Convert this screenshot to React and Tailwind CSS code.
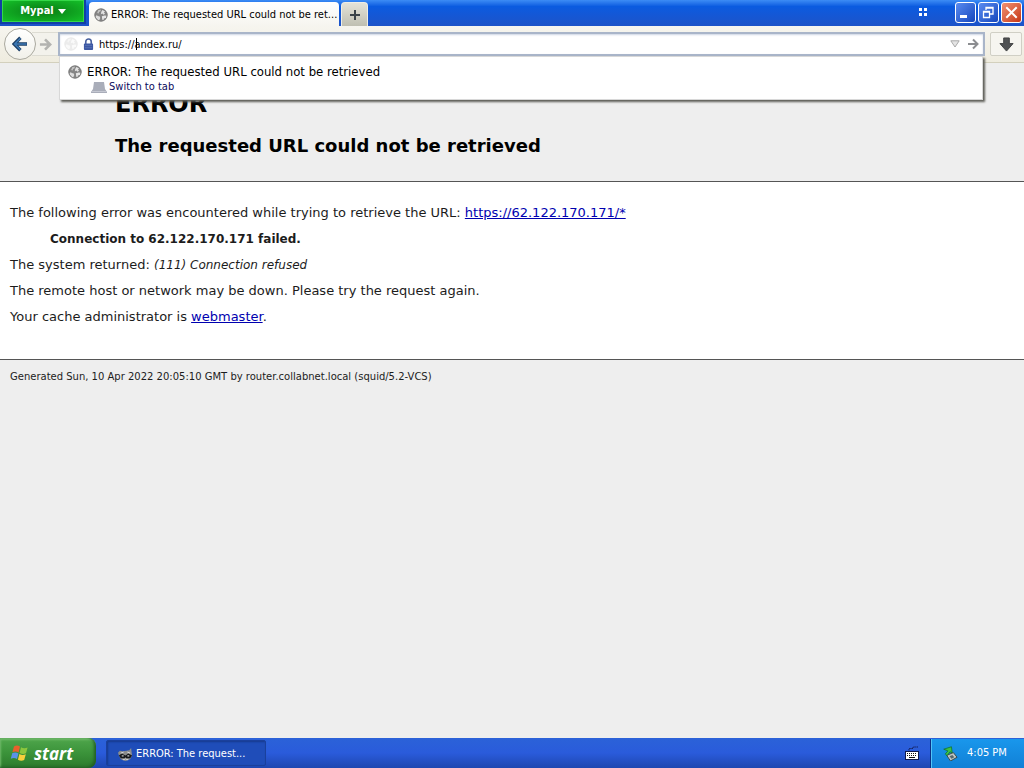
import { useState } from 'react';

const Globe = ({ className }) => (
  <svg viewBox="0 0 16 16" className={className} aria-hidden="true">
    <circle cx="8" cy="8" r="7.4" fill="#858585" />
    <path d="M1.4 9.600 3 8.400 4.400 9.200 6.600 9.600 7.200 11.400 5.800 14.600 3.400 13.200Z" fill="#dcdcdc" />
    <path d="M5 2.400 8 1.400 7.400 3.600 5.800 4.600 5.200 6.400 3.600 5.600Z" fill="#c4c4c4" />
    <path d="M9.400 2.400 12.600 3.600 11.400 5 12.600 6.600 10.800 7.800 9.600 6.400 7.800 7 8.200 4.800Z" fill="#e2e2e2" />
    <path d="M9 9.400 12.200 8.600 14.600 8.800 13.600 11.400 11.200 12 10.800 14.200 9.400 13Z" fill="#e6e6e6" />
    <circle cx="8" cy="8" r="7" fill="none" stroke="#7a7a7a" />
  </svg>
);

const TitleBar = () => (
  <header className="flex h-[26px] items-start bg-linear-to-b from-[#3c8cf5] via-[#0a5be0] via-25% to-[#1c53c8]">
    <button
      type="button"
      className="mr-[3px] flex h-6 w-[86px] shrink-0 items-center justify-center gap-1 border-2 border-t-0 border-[#123fa5] bg-radial-[at_50%_50%] from-[#087a14] to-[#15c42a] text-[11px] font-bold text-white shadow-[inset_0_0_0_1px_#35d848]"
    >
      Mypal
      <svg viewBox="0 0 8 5" className="h-[5px] w-2" aria-hidden="true">
        <path d="M0 0h8L4 5Z" fill="#fff" />
      </svg>
    </button>
    <div className="mt-[2px] flex h-6 w-[250px] items-center rounded-t-[4px] bg-linear-to-b from-white to-[#f6f5ef] pt-[2px] pl-[5px] text-[11px]">
      <Globe className="mr-[3px] h-[14px] w-[14px] shrink-0" />
      <span className="truncate">ERROR: The requested URL could not be ret...</span>
    </div>
    <button
      type="button"
      aria-label="New tab"
      className="mt-[2px] ml-[2px] flex h-6 w-[27px] items-center justify-center rounded-t-[4px] border border-b-0 border-[#eeeee6] bg-linear-to-b from-[#e4e3d8] to-[#bfbfb2]"
    >
      <svg viewBox="0 0 12 12" className="h-3 w-3" aria-hidden="true">
        <path d="M6 1v10M1 6h10" stroke="#3b4449" strokeWidth="2" />
      </svg>
    </button>
    <div className="ml-auto flex items-center gap-[2px] pt-[2px] pr-[2px]">
      <svg viewBox="0 0 9 9" className="mr-[25px] h-[9px] w-[9px]" aria-hidden="true">
        <path d="M0 0h3v3H0zM5 0h3v3H5zM0 5h3v3H0zM5 5h3v3H5z" fill="#fff" />
      </svg>
      <button
        type="button"
        aria-label="Minimize"
        className="flex h-[21px] w-[21px] items-center justify-center rounded-[3px] border border-white bg-linear-to-br from-[#5a8bf0] to-[#1546bd]"
      >
        <svg viewBox="0 0 15 15" className="h-[15px] w-[15px]" aria-hidden="true">
          <path d="M2 10h7v3H2z" fill="#fff" />
        </svg>
      </button>
      <button
        type="button"
        aria-label="Restore"
        className="flex h-[21px] w-[21px] items-center justify-center rounded-[3px] border border-white bg-linear-to-br from-[#5a8bf0] to-[#1546bd]"
      >
        <svg viewBox="0 0 15 15" className="h-[15px] w-[15px]" aria-hidden="true">
          <path d="M5 5V2.500h7V9h-3M5 3h7" fill="none" stroke="#fff" strokeWidth="1.3" />
          <path d="M2.500 6.500h6v6h-6zM2 7h7" fill="none" stroke="#fff" strokeWidth="1.3" />
        </svg>
      </button>
      <button
        type="button"
        aria-label="Close"
        className="flex h-[21px] w-[21px] items-center justify-center rounded-[3px] border border-white bg-linear-to-br from-[#f09070] to-[#c6340f]"
      >
        <svg viewBox="0 0 15 15" className="h-[15px] w-[15px]" aria-hidden="true">
          <path d="m3 3 9 9M12 3l-9 9" stroke="#fff" strokeWidth="2" strokeLinecap="square" />
        </svg>
      </button>
    </div>
  </header>
);

const Toolbar = () => {
  const [url, setUrl] = useState('https://andex.ru/');

  return (
    <div className="flex h-[37px] items-center border-b border-[#d3d0bd] bg-linear-to-b from-[#f6f5ef] to-[#efecdf] pr-[2px] pl-1">
      <button
        type="button"
        aria-label="Back"
        className="z-10 flex h-8 w-8 shrink-0 items-center justify-center rounded-full border border-[#aaa99f] bg-linear-to-b from-white to-[#f1f0e9]"
      >
        <svg viewBox="0 0 16 16" className="h-4 w-4" aria-hidden="true">
          <path d="M8.4 1.8 2.2 8l6.2 6.2M3 8h12" fill="none" stroke="#1d3f66" strokeWidth="3.4" />
          <path d="M8.4 2.2 2.7 8l5.7 5.8M3 8h11.6" fill="none" stroke="#3c78b4" strokeWidth="1.6" />
        </svg>
      </button>
      <button
        type="button"
        aria-label="Forward"
        className="-ml-1 flex h-6 w-[26px] shrink-0 items-center justify-center border-y border-[#dddcd3] bg-[#f3f2ec]"
      >
        <svg viewBox="0 0 14 14" className="h-[13px] w-[13px]" aria-hidden="true">
          <path d="m6.5 1.5 5.5 5.5-5.5 5.5M1 7h10" fill="none" stroke="#b3b3b0" strokeWidth="2.8" />
        </svg>
      </button>
      <div className="relative flex h-6 min-w-0 flex-1 items-center border-2 border-[#a9b5c9] bg-white px-1 shadow-[inset_0_1px_2px_#cdd6e4]">
        <Globe className="mr-[5px] h-[14px] w-[14px] shrink-0 opacity-15" />
        <svg viewBox="0 0 12 14" className="mr-[5px] h-[13px] w-[11px] shrink-0" aria-hidden="true">
          <path d="M3 7V4a3 3 0 0 1 6 0v3" fill="none" stroke="#4a62a0" strokeWidth="1.8" />
          <rect x="1" y="6" width="10" height="7" rx="1" fill="#3d58a4" />
          <path d="M2 8h8M2 10.500h8" stroke="#6079b8" strokeWidth=".8" />
        </svg>
        <input
          type="text"
          aria-label="Address"
          value={url}
          onChange={(e) => setUrl(e.target.value)}
          className="min-w-0 flex-1 bg-transparent pt-[2px] text-[11px] text-black outline-none"
        />
        {/* Text cursor */}
        <span className="absolute top-1 left-[76px] h-3 w-px bg-black" />
        <button type="button" aria-label="Show history" className="mr-[7px]">
          <svg viewBox="0 0 10 8" className="h-2 w-[10px]" aria-hidden="true">
            <path d="M.8.8h8.400L5 7Z" fill="#e4e4e4" stroke="#a9a9a9" />
          </svg>
        </button>
        <button type="button" aria-label="Go">
          <svg viewBox="0 0 12 12" className="h-3 w-3" aria-hidden="true">
            <path d="m6 1.500 4.500 4.500L6 10.500M1 6h9" fill="none" stroke="#8b8d90" strokeWidth="2" />
          </svg>
        </button>

        {/* Autocomplete popup */}
        <div className="absolute top-[22px] right-0 -left-px z-20 h-11 border border-[#d8d8d8] bg-white pt-[7px] pl-2 shadow-[2px_2px_2px_#5f5f58]">
          <div className="flex items-center text-[13px] leading-4">
            <Globe className="mr-[5px] h-[14px] w-[14px] shrink-0" />
            ERROR: The requested URL could not be retrieved
          </div>
          <a href="#tab" className="ml-[23px] flex items-center text-[11px] leading-[14px] text-[#0b0b5c]">
            <svg viewBox="0 0 16 11" className="mr-[2px] h-[11px] w-4" aria-hidden="true">
              <path d="M3 0h10l1 7 2 3v1H0v-1l2-3Z" fill="#a9adb9" />
              <path d="M0 9.500h16" stroke="#c5c8d2" />
            </svg>
            Switch to tab
          </a>
        </div>
      </div>
      <button
        type="button"
        aria-label="Downloads"
        className="ml-[5px] flex h-6 w-8 shrink-0 items-center justify-center rounded-[2px] border border-[#d0cfc5] bg-[#f6f5f0]"
      >
        <svg viewBox="0 0 16 16" className="h-[15px] w-[15px]" aria-hidden="true">
          <path d="M5 1h6v6h4l-7 8-7-8h4Z" fill="#505254" stroke="#3d3f40" />
        </svg>
      </button>
    </div>
  );
};

const ErrorPage = () => (
  <main className="flex-1 bg-[#eeeeee] font-[Verdana,'DejaVu_Sans',sans-serif] text-[#1c1c1c]">
    <div className="border-b border-[#555] pt-[26px] pb-6 pl-[115px] text-black">
      <h1 className="text-[24px] leading-[30px] font-bold">ERROR</h1>
      <h2 className="mt-4 text-[18px] leading-[22px] font-bold">The requested URL could not be retrieved</h2>
    </div>
    <div className="border-b border-[#555] bg-white px-[10px] pt-[18px] pb-[29px] text-[13px] leading-[26px]">
      <p>
        The following error was encountered while trying to retrieve the URL:{' '}
        <a href="https://62.122.170.171/*" className="text-[#0000b0] underline">https://62.122.170.171/*</a>
      </p>
      <blockquote className="ml-10 text-[12px] font-bold">Connection to 62.122.170.171 failed.</blockquote>
      <p>The system returned: <i className="text-[12px]">(111) Connection refused</i></p>
      <p>The remote host or network may be down. Please try the request again.</p>
      <p>
        Your cache administrator is <a href="#webmaster" className="text-[#0000b0] underline">webmaster</a>.
      </p>
    </div>
    <p className="px-[10px] pt-[9px] text-[10px] leading-4">
      Generated Sun, 10 Apr 2022 20:05:10 GMT by router.collabnet.local (squid/5.2-VCS)
    </p>
  </main>
);

const Taskbar = () => (
  <footer className="flex h-[30px] items-stretch bg-linear-to-b from-[#2b62d8] via-[#2a5bdb] to-[#1e47b0] text-[11px] text-white">
    <button
      type="button"
      className="flex w-24 items-center rounded-r-[8px] bg-linear-to-b from-[#4fa64c] via-[#3b933a] to-[#2c7a2c] pl-[10px] font-['Open_Sans','Noto_Sans',sans-serif] text-[17px] leading-none font-bold italic shadow-[inset_-2px_-1px_3px_#235f25,inset_1px_2px_2px_#72bd6c]"
    >
      <svg viewBox="0 0 20 18" className="mr-1 h-[18px] w-5" aria-hidden="true">
        <path d="M4 2.500Q7 .5 10 2.600L8.600 8.400Q5.600 6.600 2.400 8.200Z" fill="#e8602c" />
        <path d="M11 3.200Q14 5 17.600 3.400L16 9.200Q13 10.800 9.600 9Z" fill="#8cc63e" />
        <path d="M2.200 9.200Q5.400 7.600 8.400 9.400L7 15Q4 13.200.8 14.800Z" fill="#5a92e8" />
        <path d="M9.400 10Q12.600 11.800 15.800 10.200L14.200 16Q11.200 17.600 7.900 15.800Z" fill="#f8cf3c" />
      </svg>
      start
    </button>
    <button
      type="button"
      className="my-[2px] ml-[10px] flex w-40 items-center rounded-[2px] border border-[#1a409c] bg-[#1f4db9] pt-[2px] pl-[11px] shadow-[inset_1px_1px_2px_#163a8c]"
    >
      <svg viewBox="0 0 16 16" className="mr-[3px] h-[15px] w-[15px]" aria-hidden="true">
        <path d="M0 6 2 4l3 .5L9 4l3-.500L14 1l.5 4L15 9l-2 4-5 2-5-2-2-4Z" fill="#8b8d8c" />
        <path d="m1 9 3-2 4 2 3-2 4 2-2 3H9l-1-1-1 1H3Z" fill="#16191b" />
        <path d="m3 6.500 3-1M10 5.500l3 1M5 13.500h2l1-1 1 1h2" stroke="#dedede" fill="none" />
        <path d="M4 9.500h2M10 9.500h2" stroke="#fff" />
      </svg>
      ERROR: The request...
    </button>
    <div className="ml-auto flex items-center pr-3">
      <svg viewBox="0 0 14 14" className="h-[14px] w-[14px]" aria-hidden="true">
        <path d="M4 4.500V2.500h4V1h5" fill="none" stroke="#14205c" strokeDasharray="1.500 .7" />
        <rect x=".5" y="5.500" width="13" height="8" fill="#fff" stroke="#111b4c" />
        <path d="M2 7.500h10M2 9.500h10" stroke="#111" strokeDasharray="1 1" />
        <path d="M4 11.500h6" stroke="#111" />
      </svg>
    </div>
    <div className="mt-px flex w-[93px] items-center border-l border-[#53c5f7] bg-linear-to-b from-[#1997ec] to-[#1180d6] pl-[11px] shadow-[-1px_0_0_#0b2f86]">
      <svg viewBox="0 0 16 16" className="mr-[9px] h-[15px] w-[15px]" aria-hidden="true">
        <path d="m4 10 7-3 4 5-7 4Z" fill="#bfc6c4" stroke="#384644" />
        <path d="m7 11 3-1.500 2 2.500-3 1.500Z" fill="#56686b" />
        <path d="M.8 3.400 9 .8l.8 6.600-2.400-1.200-3 4-2-1.600 2.800-3.400Z" fill="#3cc246" stroke="#12712a" strokeWidth=".8" />
      </svg>
      <time className="whitespace-nowrap">4:05 PM</time>
    </div>
  </footer>
);

const App = () => (
  <div className="flex min-h-screen flex-col font-[Tahoma,'DejaVu_Sans_Condensed','DejaVu_Sans',sans-serif] text-black">
    <TitleBar />
    <Toolbar />
    <ErrorPage />
    <Taskbar />
  </div>
);

export default App;
